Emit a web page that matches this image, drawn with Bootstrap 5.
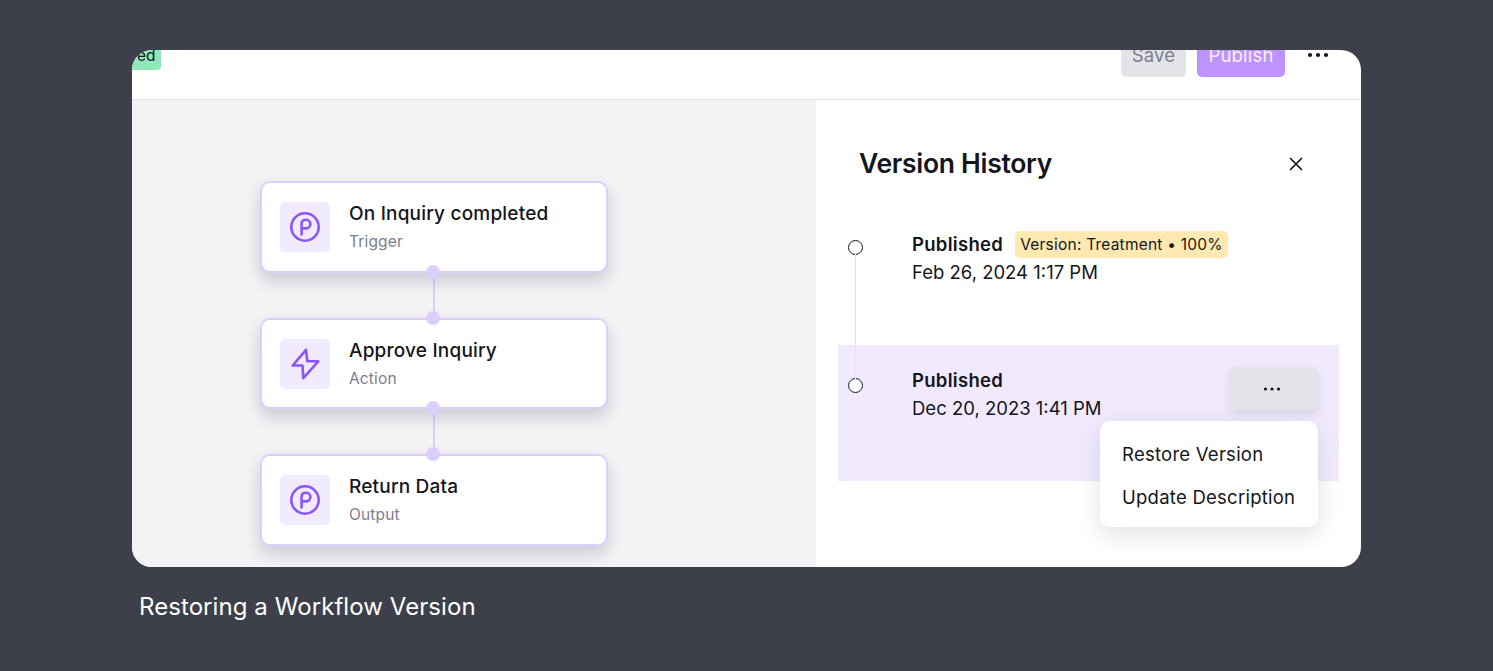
<!DOCTYPE html>
<html lang="en">
<head>
  <meta charset="UTF-8" />
  <meta name="viewport" content="width=device-width, initial-scale=1.0" />
  <title>Restoring a Workflow Version</title>
  <link href="https://cdn.jsdelivr.net/npm/bootstrap@5.3.0/dist/css/bootstrap.min.css" rel="stylesheet">
  <style>
    body {
      background-color: #3d3f4b;
      font-family: Inter, "Liberation Sans", sans-serif;
      color: #15151c;
      min-height: 671px;
      overflow: hidden;
    }
    .page-wrap {
      padding: 50px 132px 0;
    }
    .frame {
      height: 517px;
      border-radius: 20px;
      overflow: hidden;
      background-color: #fff;
    }
    .top-bar {
      height: 50px;
      border-bottom: 1px solid #e6e6ea;
      padding-right: 32px;
    }
    .status-tag {
      background-color: #90e8b8;
      color: #15151c;
      font-size: 15.5px;
      line-height: 12px;
      padding: 0 5px 0 5px;
      height: 20px;
      margin-bottom: 29px;
      border-radius: 0 0 4px 0;
    }
    .top-btn {
      height: 40px;
      margin-bottom: 22px;
      border: 0;
      border-radius: 5px;
      font-size: 18.5px;
      line-height: 24px;
      padding: 6px 0 10px;
      letter-spacing: 0.2px;
    }
    .btn-save, .btn-save:disabled {
      background-color: #e3e3e8;
      color: #7c7c90;
      opacity: 1;
      width: 65px;
    }
    .btn-publish, .btn-publish:disabled {
      background-color: #bd94ff;
      color: #f6f0ff;
      opacity: 1;
      width: 88px;
      margin-left: 11px;
    }
    .top-dots {
      margin: 0 0 41px 22px;
    }
    .canvas-pane {
      width: 684px;
      background-color: #f3f3f6;
      padding: 81px 0 0 128px;
    }
    .flow-node {
      width: 348px;
      border: 2px solid #dccfff;
      border-radius: 10px;
      background-color: #fff;
      box-shadow: 0 8px 16px rgba(40, 40, 60, 0.2);
      position: relative;
      padding: 18px;
      gap: 19px;
    }
    .node-h1 { height: 92px; }
    .node-h2 { height: 91px; }
    .node-h3 { height: 92px; }
    .node-icon {
      width: 50px;
      height: 50px;
      background-color: #f2ebff;
      border-radius: 5px;
      flex-shrink: 0;
    }
    .node-title {
      font-size: 19px;
      font-weight: 500;
      letter-spacing: 0.2px;
      line-height: 24px;
      color: #15151c;
    }
    .node-sub {
      font-size: 15.5px;
      letter-spacing: 0.15px;
      line-height: 20px;
      color: #7c7c90;
      margin-top: 6px;
    }
    .flow-link {
      width: 2px;
      height: 45px;
      background-color: #dccfff;
      margin-left: 173px;
    }
    .flow-dot {
      position: absolute;
      left: 164px;
      width: 14px;
      height: 14px;
      border-radius: 50%;
      background-color: #dccfff;
    }
    .dot-top { top: -9px; }
    .dot-bottom { bottom: -8px; }
    .history-pane {
      width: 545px;
      padding: 0 22px;
      position: relative;
    }
    .history-head {
      height: 109px;
      padding: 46px 35px 0 22px;
    }
    .history-title {
      font-size: 26.5px;
      font-weight: 600;
      letter-spacing: -0.3px;
      line-height: 34px;
      color: #15151c;
      margin: 0 0 0 -1px;
    }
    .close-mark {
      margin-top: 10px;
    }
    .history-item {
      height: 136px;
      position: relative;
      padding: 21px 21px 0 74px;
      font-size: 18.5px;
      line-height: 28px;
    }
    .history-active {
      background-color: #f1eaff;
    }
    .item-ring {
      position: absolute;
      left: 10px;
      top: 31px;
      width: 15px;
      height: 15px;
      border: 1.7px solid #15151c;
      border-radius: 50%;
      background-color: #fff;
    }
    .history-active .item-ring {
      top: 33px;
    }
    .item-line {
      position: absolute;
      left: 17px;
      top: 45px;
      width: 1px;
      height: 125px;
      background-color: #e3e3e8;
      z-index: 1;
    }
    .item-state {
      font-weight: 600;
      letter-spacing: 0.3px;
    }
    .version-tag {
      background-color: #ffe9b1;
      color: #15151c;
      font-size: 15.5px;
      font-weight: 400;
      letter-spacing: 0.22px;
      line-height: 21px;
      padding: 3px 5px;
      margin-left: 12px;
      border-radius: 5px;
    }
    .row-btn {
      width: 88px;
      height: 43px;
      background-color: #e3e3e8;
      border: 0;
      border-radius: 5px;
      box-shadow: 0 4px 10px rgba(40, 40, 60, 0.12);
      margin-top: 1px;
      padding: 0;
    }
    .row-dots {
      display: block;
      margin-left: 33px;
    }
    .version-menu.dropdown-menu {
      position: absolute;
      display: block;
      top: 76px;
      right: 21px;
      width: 218px;
      min-width: 0;
      height: 106px;
      padding: 12px 0;
      border: 0;
      border-radius: 10px;
      box-shadow: 0 8px 24px rgba(40, 40, 60, 0.14);
    }
    .version-menu .dropdown-item {
      font-size: 18.5px;
      letter-spacing: 0.25px;
      line-height: 24px;
      padding: 9px 22px;
      margin-bottom: 1px;
      color: #15151c;
    }
    .caption {
      color: #fff;
      font-size: 24px;
      letter-spacing: 0.07px;
      line-height: 32px;
      margin: 24px 0 0 7px;
    }
  </style>
</head>
<body>
  <div class="page-wrap">
    <div class="frame d-flex flex-column">
      <div class="top-bar d-flex align-items-end flex-shrink-0">
        <span class="status-tag">ed</span>
        <div class="ms-auto d-flex align-items-end">
          <button class="btn top-btn btn-save" disabled>Save</button>
          <button class="btn top-btn btn-publish" disabled>Publish</button>
          <svg class="top-dots" width="22" height="6" viewBox="0 0 22 6" fill="#15151c"><circle cx="3" cy="3" r="2.1"/><circle cx="11" cy="3" r="2.1"/><circle cx="19" cy="3" r="2.1"/></svg>
        </div>
      </div>

      <div class="d-flex flex-grow-1">
        <div class="canvas-pane">
          <div class="flow-node node-h1 card flex-row align-items-center">
            <div class="node-icon d-flex align-items-center justify-content-center">
              <svg width="32" height="32" viewBox="0 0 32 32" fill="none" stroke="#8b55fa" stroke-width="2.6" stroke-linecap="round" stroke-linejoin="round"><circle cx="16" cy="16" r="13.7"/><path d="M12.6 23.5V12.2a3.9 3.9 0 0 1 3.9-3.4h.6a4.2 4.2 0 0 1 0 8.6h-4.5"/></svg>
            </div>
            <div>
              <div class="node-title">On Inquiry completed</div>
              <div class="node-sub">Trigger</div>
            </div>
            <span class="flow-dot dot-bottom"></span>
          </div>
          <div class="flow-link"></div>
          <div class="flow-node node-h2 card flex-row align-items-center">
            <div class="node-icon d-flex align-items-center justify-content-center">
              <svg width="32" height="32" viewBox="0 0 32 32" fill="none" stroke="#8b55fa" stroke-width="2.6" stroke-linecap="round" stroke-linejoin="round"><path d="M17 1.9 3.7 17.5h9.8l.8 12.6 15-16.8H18.3z"/></svg>
            </div>
            <div>
              <div class="node-title">Approve Inquiry</div>
              <div class="node-sub">Action</div>
            </div>
            <span class="flow-dot dot-top"></span>
            <span class="flow-dot dot-bottom"></span>
          </div>
          <div class="flow-link"></div>
          <div class="flow-node node-h3 card flex-row align-items-center">
            <div class="node-icon d-flex align-items-center justify-content-center">
              <svg width="32" height="32" viewBox="0 0 32 32" fill="none" stroke="#8b55fa" stroke-width="2.6" stroke-linecap="round" stroke-linejoin="round"><circle cx="16" cy="16" r="13.7"/><path d="M12.6 23.5V12.2a3.9 3.9 0 0 1 3.9-3.4h.6a4.2 4.2 0 0 1 0 8.6h-4.5"/></svg>
            </div>
            <div>
              <div class="node-title">Return Data</div>
              <div class="node-sub">Output</div>
            </div>
            <span class="flow-dot dot-top"></span>
          </div>
        </div>

        <div class="history-pane">
          <div class="history-head d-flex justify-content-between">
            <h2 class="history-title">Version History</h2>
            <svg class="close-mark" width="16" height="16" viewBox="0 0 16 16" fill="none" stroke="#15151c" stroke-width="1.7" stroke-linecap="round"><path d="M2.5 2.5l11 11M13.5 2.5l-11 11"/></svg>
          </div>
          <div class="history-item">
            <span class="item-ring"></span>
            <span class="item-line"></span>
            <div class="d-flex align-items-center"><span class="item-state">Published</span><span class="version-tag">Version: Treatment • 100%</span></div>
            <div>Feb 26, 2024 1:17 PM</div>
          </div>
          <div class="history-item history-active d-flex justify-content-between">
            <span class="item-ring"></span>
            <div>
              <div class="item-state">Published</div>
              <div>Dec 20, 2023 1:41 PM</div>
            </div>
            <button class="btn row-btn flex-shrink-0" aria-label="More">
              <svg class="row-dots" width="18" height="4" viewBox="0 0 18 4" fill="#15151c"><circle cx="2.5" cy="2" r="1.6"/><circle cx="9" cy="2" r="1.6"/><circle cx="15.5" cy="2" r="1.6"/></svg>
            </button>
            <ul class="dropdown-menu version-menu list-unstyled">
              <li><span class="dropdown-item">Restore Version</span></li>
              <li><span class="dropdown-item">Update Description</span></li>
            </ul>
          </div>
        </div>
      </div>
    </div>
    <p class="caption">Restoring a Workflow Version</p>
  </div>
  <script src="https://cdn.jsdelivr.net/npm/bootstrap@5.3.0/dist/js/bootstrap.bundle.min.js"></script>
</body>
</html>
